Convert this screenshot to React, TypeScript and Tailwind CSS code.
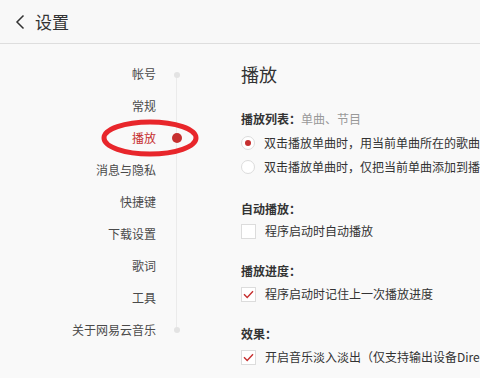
import React from 'react';

const font = { fontFamily: '"Noto Sans CJK SC", "Noto Sans", sans-serif' };

const navItems = ['帐号', '常规', '播放', '消息与隐私', '快捷键', '下载设置', '歌词', '工具', '关于网易云音乐'];

const Radio = ({ checked }: { checked?: boolean }) => (
  <span className="flex h-[14px] w-[14px] shrink-0 items-center justify-center rounded-full border border-[#dcdcdc] bg-white">
    {checked && <span className="h-[6px] w-[6px] rounded-full bg-[#c62f2f]" />}
  </span>
);

const Check = ({ checked }: { checked?: boolean }) => (
  <span className="flex h-[15px] w-[15px] shrink-0 items-center justify-center border border-[#dcdcdc] bg-white">
    {checked && (
      <svg width="11" height="9" viewBox="0 0 11 9" fill="none">
        <path d="M1 4.2 L4.2 7.5 L10 1.2" stroke="#c62f2f" strokeWidth="1.4" />
      </svg>
    )}
  </span>
);

const Row = ({ control, children }: { control: React.ReactNode; children: React.ReactNode }) => (
  <div className="flex h-[24px] items-center gap-[9px] whitespace-nowrap text-[12px] text-[#333]">
    {control}
    <span>{children}</span>
  </div>
);

const Label = ({ children }: { children: React.ReactNode }) => (
  <div className="h-[20px] text-[12px] font-bold leading-[20px] text-[#333]">{children}</div>
);

export default function App() {
  return (
    <div className="h-[378px] w-[480px] overflow-hidden bg-[#f9f9f9]" style={font}>
      <header className="flex h-[44px] items-center border-b border-[#dedede] bg-[#f8f8f8] pl-[15px]">
        <svg width="10" height="16" viewBox="0 0 10 16" fill="none">
          <path d="M8.5 1.5 L2 8 L8.5 14.5" stroke="#333" strokeWidth="1.5" />
        </svg>
        <span className="ml-[10px] text-[17px] text-[#333]">设置</span>
      </header>

      <div className="flex">
        <div className="relative w-[200px] shrink-0 pt-[14px]">
          {navItems.map((item) => (
            <div
              key={item}
              className={`flex h-[32px] w-[156px] items-center justify-end text-[12px] ${
                item === '播放' ? 'text-[#c62f2f]' : 'text-[#4a4a4a]'
              }`}
            >
              {item}
            </div>
          ))}
          <div className="absolute left-[176px] top-[31px] h-[255px] w-px bg-[#ebebeb]" />
          <div className="absolute left-[174px] top-[28px] h-[6px] w-[6px] rounded-full bg-[#e3e3e3]" />
          <div className="absolute left-[174px] top-[283px] h-[6px] w-[6px] rounded-full bg-[#e3e3e3]" />
          <div className="absolute left-[172px] top-[89px] h-[10px] w-[10px] rounded-full bg-[#c62f2f]" />
          <svg className="absolute left-[100px] top-[74px]" width="102" height="40" viewBox="0 0 102 40" fill="none">
            <ellipse cx="50" cy="20" rx="46" ry="16" stroke="#e8262b" strokeWidth="5" />
          </svg>
        </div>

        <div className="ml-[41px] min-w-0 flex-1 overflow-hidden">
          <h1 className="mt-[16px] h-[28px] text-[18px] leading-[28px] text-[#333]">播放</h1>

          <div className="mt-[21px]">
            <Label>
              播放列表：<span className="font-normal text-[#999]">单曲、节目</span>
            </Label>
            <div className="mt-[2px]">
              <Row control={<Radio checked />}>双击播放单曲时，用当前单曲所在的歌曲</Row>
              <Row control={<Radio />}>双击播放单曲时，仅把当前单曲添加到播</Row>
            </div>
          </div>

          <div className="mt-[20px]">
            <Label>自动播放：</Label>
            <Row control={<Check />}>程序启动时自动播放</Row>
          </div>

          <div className="mt-[18px]">
            <Label>播放进度：</Label>
            <div className="mt-px">
              <Row control={<Check checked />}>程序启动时记住上一次播放进度</Row>
            </div>
          </div>

          <div className="mt-[18px]">
            <Label>效果：</Label>
            <div className="mt-px">
              <Row control={<Check checked />}>开启音乐淡入淡出（仅支持输出设备Dire</Row>
            </div>
          </div>
        </div>
      </div>
    </div>
  );
}
